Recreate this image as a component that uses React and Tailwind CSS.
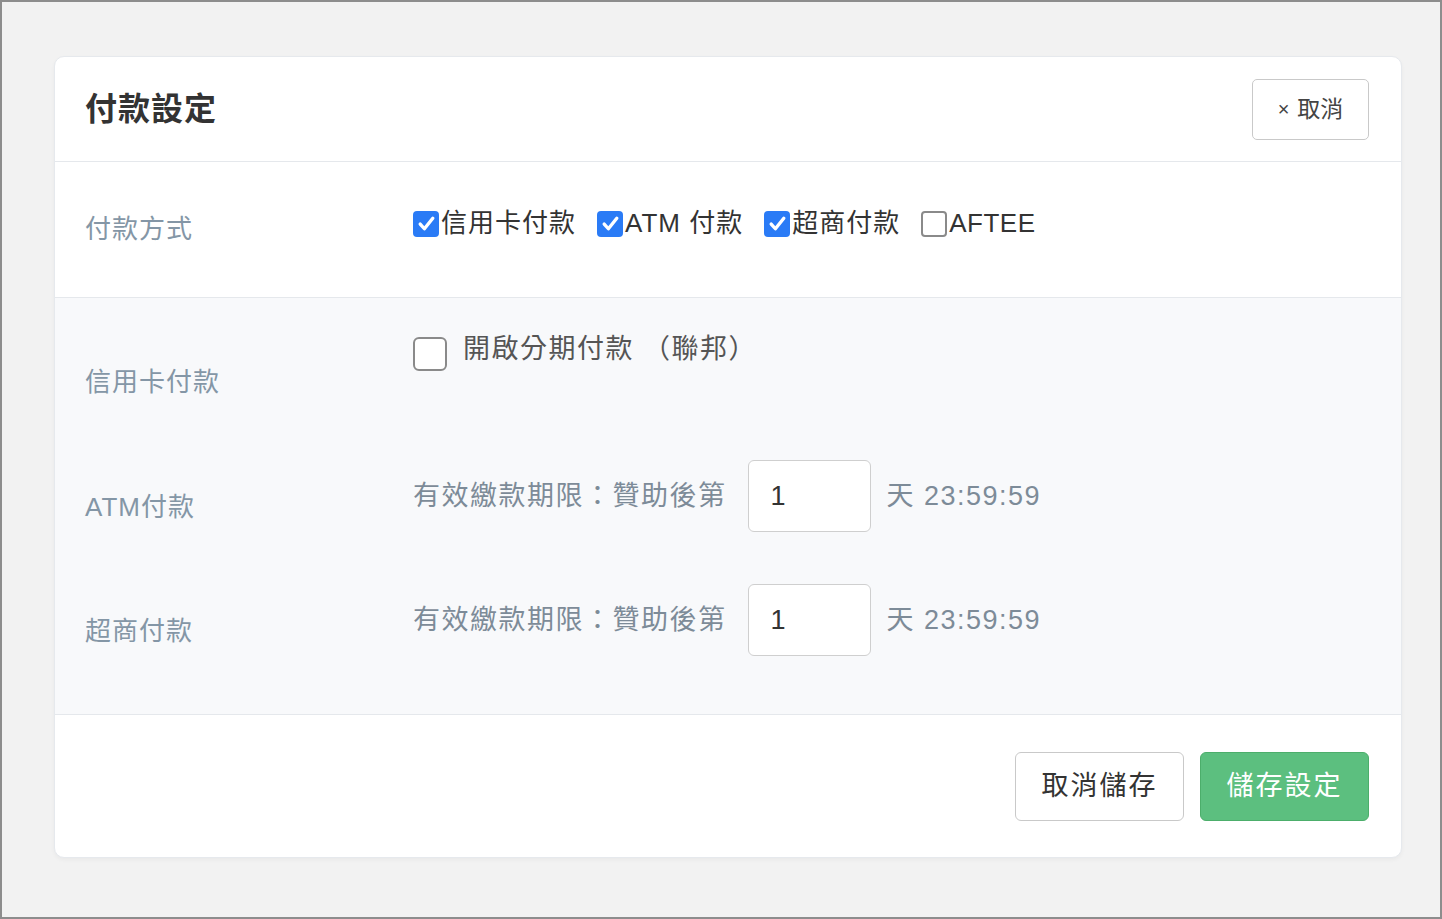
import { useState } from 'react';

const font = { fontFamily: '"Liberation Sans", "Noto Sans CJK TC", sans-serif' };

const CheckIcon = () => (
    <svg viewBox="0 0 20 20" className="w-[21px] h-[21px]" fill="none" stroke="white" strokeWidth="3.2" strokeLinecap="round" strokeLinejoin="round">
        <path d="M4 10.5l4 4.5 8-10" />
    </svg>
);

const SmallCheck = ({ checked }) => (
    <span
        className={`w-[26px] h-[26px] rounded-[4px] flex items-center justify-center shrink-0 ${checked ? 'bg-[#2a7bf6]' : 'bg-white border-2 border-[#8a8a8a]'}`}
    >
        {checked && <CheckIcon />}
    </span>
);

const methods = [
    { key: 'card', label: '信用卡付款' },
    { key: 'atm', label: 'ATM 付款' },
    { key: 'cvs', label: '超商付款' },
    { key: 'aftee', label: 'AFTEE' },
];

const DeadlineRow = ({ label, value, onChange }) => (
    <div className="flex items-start h-[124px]">
        <div className="w-[328px] pt-[29px] text-[26px] leading-[36px] tracking-[1px] text-[#8496a6]">{label}</div>
        <div className="flex items-center text-[27px] text-[#7d8b98]">
            <span className="tracking-[1.5px]">有效繳款期限：贊助後第</span>
            <input
                value={value}
                onChange={(e) => onChange(e.target.value)}
                className="ml-[21px] w-[123px] h-[72px] bg-white border border-[#cfcfcf] rounded-[6px] px-[22px] text-[27px] text-[#333] outline-none"
            />
            <span className="ml-4 tracking-[1.5px]">天 23:59:59</span>
        </div>
    </div>
);

export default function App() {
    const [selected, setSelected] = useState({ card: true, atm: true, cvs: true, aftee: false });
    const [installment, setInstallment] = useState(false);
    const [atmDays, setAtmDays] = useState('1');
    const [cvsDays, setCvsDays] = useState('1');

    const toggle = (key) => setSelected({ ...selected, [key]: !selected[key] });

    return (
        <div className="w-[1442px] h-[919px] bg-[#f2f2f2] border-2 border-[#8d8d8d] pt-[54px] pl-[52px]" style={font}>
            <div className="w-[1348px] bg-white rounded-[10px] border border-[#e6e9ed] shadow-[0_2px_4px_rgba(0,0,0,0.04)] overflow-hidden">
                {/* header */}
                <div className="h-[105px] flex items-center justify-between pl-[30px] pr-[32px] border-b border-[#e5e8ec]">
                    <h1 className="text-[32px] font-bold tracking-[1px] text-[#333]">付款設定</h1>
                    <button className="w-[117px] h-[61px] border border-[#c9c9c9] rounded-[5px] text-[23px] text-[#444] flex items-center justify-center gap-2">
                        <span className="text-[20px]">×</span>取消
                    </button>
                </div>

                {/* payment methods */}
                <div className="h-[136px] flex items-start border-b border-[#e5e8ec] pl-[30px]">
                    <div className="w-[328px] pt-[49px] text-[26px] leading-[36px] tracking-[1px] text-[#8496a6]">付款方式</div>
                    <div className="flex items-center gap-[21px] pt-[42px] text-[26px] text-[#333]">
                        {methods.map(m => (
                            <label key={m.key} className={`flex items-center gap-[2px] cursor-pointer ${m.key === 'aftee' ? 'tracking-[0.5px]' : 'tracking-[1px]'}`} onClick={() => toggle(m.key)}>
                                <SmallCheck checked={selected[m.key]} />
                                <span>{m.label}</span>
                            </label>
                        ))}
                    </div>
                </div>

                {/* details */}
                <div className="bg-[#f8f9fb] border-b border-[#e5e8ec] pl-[30px] pt-[39px] pb-[6px]">
                    <div className="flex items-start h-[123px]">
                        <div className="w-[328px] pt-[27px] text-[26px] leading-[36px] tracking-[1px] text-[#8496a6]">信用卡付款</div>
                        <label className="flex items-start gap-4 cursor-pointer" onClick={() => setInstallment(!installment)}>
                            <span className={`w-[34px] h-[34px] rounded-[6px] flex items-center justify-center ${installment ? 'bg-[#2a7bf6]' : 'bg-white border-2 border-[#8a8a8a]'}`}>
                                {installment && <CheckIcon />}
                            </span>
                            <span className="text-[27px] leading-[26px] tracking-[1.5px] text-[#555] -mt-[1px]">開啟分期付款 （聯邦）</span>
                        </label>
                    </div>
                    <DeadlineRow label="ATM付款" value={atmDays} onChange={setAtmDays} />
                    <DeadlineRow label="超商付款" value={cvsDays} onChange={setCvsDays} />
                </div>

                {/* footer */}
                <div className="h-[142px] flex items-center justify-end gap-4 pr-[32px]">
                    <button className="w-[169px] h-[69px] border border-[#c9c9c9] rounded-[6px] bg-white text-[27px] tracking-[2px] text-[#333]">取消儲存</button>
                    <button className="w-[169px] h-[69px] border border-[#4cae6b] rounded-[6px] bg-[#5cbf7f] text-[27px] tracking-[2px] text-white">儲存設定</button>
                </div>
            </div>
        </div>
    );
}
